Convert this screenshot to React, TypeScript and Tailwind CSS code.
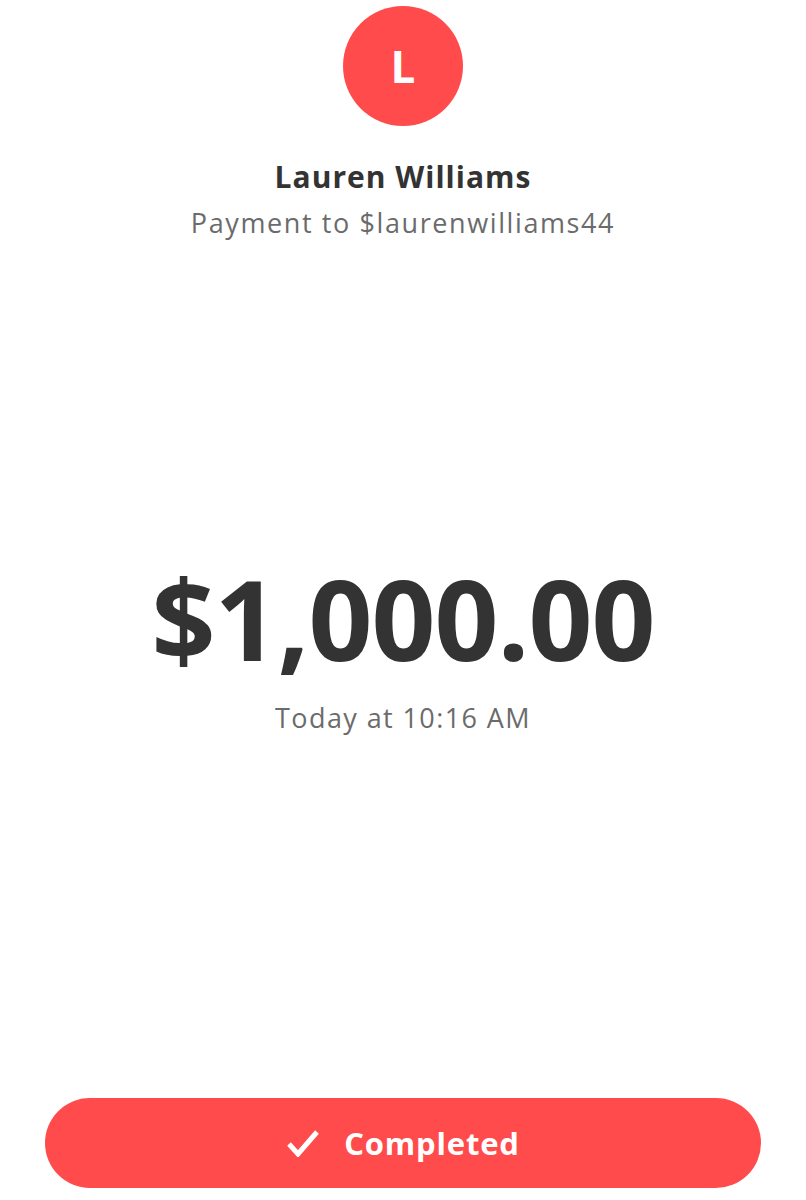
export default function App() {
  return (
    <div className="flex h-[1200px] w-[806px] flex-col items-center bg-white font-['Open_Sans',sans-serif] text-[#333333]">
      {/* avatar */}
      <div className="mt-[6px] flex size-[120px] items-center justify-center rounded-full bg-[#ff4b4b]">
        <span className="text-[44px] font-bold leading-none text-white">L</span>
      </div>

      {/* recipient */}
      <div className="mt-[31px] text-[30px] font-bold leading-[40px] tracking-[1px]">Lauren Williams</div>
      <div className="mt-[8px] text-[27px] leading-[36px] tracking-[1.6px] text-[#6b6b6b]">Payment to $laurenwilliams44</div>

      {/* amount */}
      <div className="mt-[317px] text-[112px] font-bold leading-[120px] tracking-[-1px]">$1,000.00</div>
      <div className="mt-[22px] text-[27px] leading-[36px] tracking-[1.4px] text-[#6b6b6b]">Today at 10:16 AM</div>

      <div className="flex-1" />

      {/* status */}
      <div className="mb-[12px] flex h-[90px] w-[716px] items-center justify-center gap-[24px] rounded-full bg-[#ff4b4b] text-white">
        <svg width="34" height="28" viewBox="0 0 34 28" fill="none">
          <path d="M3 15 L12 25 L31 3" stroke="white" strokeWidth="5" strokeLinejoin="miter" />
        </svg>
        <span className="text-[31px] font-bold leading-none tracking-[0.8px]">Completed</span>
      </div>
    </div>
  );
}
